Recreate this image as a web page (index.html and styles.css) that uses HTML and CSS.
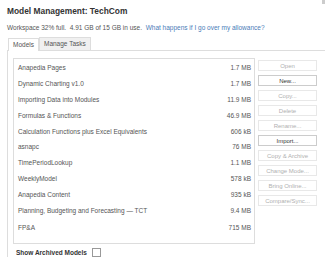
FILE: index.html
```html
<!DOCTYPE html>
<html lang="en">
  <head>
    <meta charset="UTF-8">
    <title>Model Management: TechCom</title>
    <link rel="stylesheet" href="styles.css">
  </head>
  <body>
    <div class="dialog">
      <span class="close-mark"></span>
      <h1 class="title">Model Management: TechCom</h1>
      <p class="usage">Workspace 32% full.&nbsp; 4.91 GB of 15 GB in use.&nbsp; <a href="#">What happens if I go over my allowance?</a></p>

      <div class="tabs">
        <div class="tab active">Models</div>
        <div class="tab">Manage Tasks</div>
      </div>

      <div class="panel">
        <div class="content">
          <div class="model-list">
            <div class="row"><span>Anapedia Pages</span><span>1.7 MB</span></div>
            <div class="row"><span>Dynamic Charting v1.0</span><span>1.7 MB</span></div>
            <div class="row"><span>Importing Data into Modules</span><span>11.9 MB</span></div>
            <div class="row"><span>Formulas &amp; Functions</span><span>46.9 MB</span></div>
            <div class="row"><span>Calculation Functions plus Excel Equivalents</span><span>606 kB</span></div>
            <div class="row"><span>asnapc</span><span>76 MB</span></div>
            <div class="row"><span>TimePeriodLookup</span><span>1.1 MB</span></div>
            <div class="row"><span>WeeklyModel</span><span>578 kB</span></div>
            <div class="row"><span>Anapedia Content</span><span>935 kB</span></div>
            <div class="row"><span>Planning, Budgeting and Forecasting — TCT</span><span>9.4 MB</span></div>
            <div class="row tall"><span>FP&amp;A</span><span>715 MB</span></div>
          </div>

          <div class="actions">
            <button disabled>Open</button>
            <button>New...</button>
            <button disabled>Copy...</button>
            <button disabled>Delete</button>
            <button disabled>Rename...</button>
            <button>Import...</button>
            <button disabled>Copy &amp; Archive</button>
            <button disabled>Change Mode...</button>
            <button disabled>Bring Online...</button>
            <button disabled>Compare/Sync...</button>
          </div>
        </div>

        <label class="archived">
          <span>Show Archived Models</span>
          <span class="checkbox"></span>
        </label>
      </div>
    </div>
  </body>
</html>
```

FILE: styles.css
```css
body {
  margin: 0;
  font-family: "Liberation Sans", Arial, sans-serif;
  background-color: #ffffff;
  color: #555;
}

.dialog {
  position: relative;
  padding: 6px 0 0 7px;
}

.close-mark {
  position: absolute;
  top: 0;
  right: 0;
  width: 3px;
  height: 4px;
  background-color: #ccc;
}

.title {
  margin: 1px 0 0;
  font-size: 8.4px;
  line-height: 9px;
  font-weight: bold;
  color: #333;
}

.usage {
  margin: 8px 0 0;
  font-size: 6.5px;
  line-height: 8px;
  color: #555;
}

.usage a {
  color: #4a7db8;
  text-decoration: none;
}

.tabs {
  display: flex;
  margin-top: 5px;
  padding-left: 1px;
}

.tab {
  padding: 2px 4px 3px;
  font-size: 6.5px;
  line-height: 7px;
  border: 1px solid #ddd;
  border-bottom: none;
  background-color: #f0f0f0;
  color: #555;
}

.tab.active {
  background-color: #fff;
  position: relative;
  top: 1px;
}

.panel {
  border-top: 1px solid #ddd;
  border-left: 1px solid #ddd;
  padding: 7px 0 0 5px;
}

.content {
  display: flex;
  gap: 3px;
}

.model-list {
  width: 242px;
  height: 186px;
  border: 1px solid #ddd;
  padding-top: 1px;
  box-sizing: border-box;
}

.row {
  display: flex;
  justify-content: space-between;
  height: 15.8px;
  align-items: center;
  padding: 0 3px 0 4px;
  font-size: 6.5px;
  color: #555;
}

.row.tall {
  height: 20px;
}

.actions {
  display: flex;
  flex-direction: column;
  gap: 4px;
  padding-top: 2px;
}

button {
  width: 59px;
  height: 11px;
  padding: 0;
  font-family: inherit;
  font-size: 6px;
  background-color: #fff;
  border: 1px solid #ccc;
  color: #333;
}

button:disabled {
  border-color: #e8e8e8;
  color: #b0b0b0;
}

.archived {
  display: flex;
  align-items: center;
  gap: 5px;
  margin-top: 4px;
  padding-left: 3px;
  font-size: 6.5px;
  font-weight: bold;
  color: #333;
}

.checkbox {
  width: 7px;
  height: 7px;
  border: 1px solid #999;
  background-color: #fff;
}
```
